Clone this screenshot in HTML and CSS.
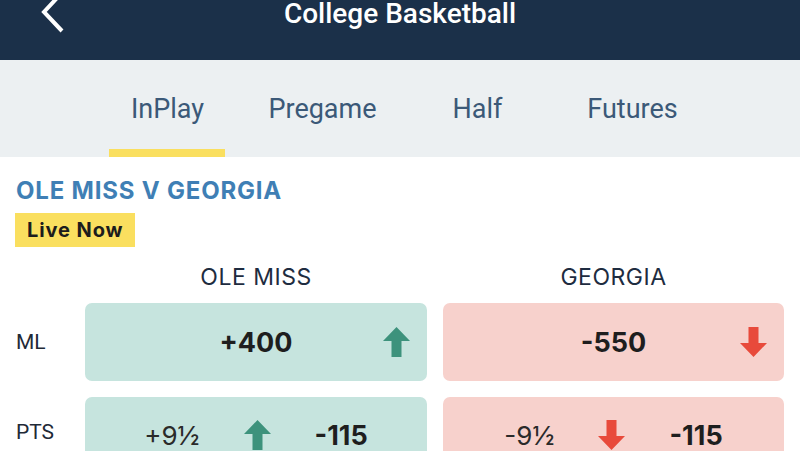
FILE: index.html
```html
<!DOCTYPE html>
<html>
<head>
<meta charset="utf-8">
<link rel="stylesheet" href="styles.css">
</head>
<body>
<header class="topbar">
  <svg class="back" width="30" height="36" viewBox="0 0 30 36"><polyline points="19,-2 6,12 24,31" fill="none" stroke="#fff" stroke-width="4"/></svg>
  <h1 class="title">College Basketball</h1>
</header>
<nav class="tabs">
  <div class="tab active"><span>InPlay</span></div>
  <div class="tab"><span>Pregame</span></div>
  <div class="tab"><span>Half</span></div>
  <div class="tab"><span>Futures</span></div>
</nav>
<main class="event">
  <h2 class="match">OLE MISS V GEORGIA</h2>
  <div class="badge">Live Now</div>
  <div class="grid">
    <div></div>
    <div class="colhead">OLE MISS</div>
    <div class="colhead">GEORGIA</div>

    <div class="label">ML</div>
    <div class="cell up single">
      <span></span>
      <span class="val">+400</span>
      <svg class="arrow" width="27" height="30" viewBox="0 0 27 30"><polygon points="0,14 13.5,0 27,14 18.5,14 18.5,30 8.5,30 8.5,14"/></svg>
    </div>
    <div class="cell down single">
      <span></span>
      <span class="val">-550</span>
      <svg class="arrow" width="27" height="30" viewBox="0 0 27 30"><polygon points="0,16 13.5,30 27,16 18.5,16 18.5,0 8.5,0 8.5,16"/></svg>
    </div>

    <div class="label">PTS</div>
    <div class="cell up split">
      <span class="line">+9½</span>
      <svg class="arrow" width="27" height="30" viewBox="0 0 27 30"><polygon points="0,14 13.5,0 27,14 18.5,14 18.5,30 8.5,30 8.5,14"/></svg>
      <span class="val">-115</span>
    </div>
    <div class="cell down split">
      <span class="line">-9½</span>
      <svg class="arrow" width="27" height="30" viewBox="0 0 27 30"><polygon points="0,16 13.5,30 27,16 18.5,16 18.5,0 8.5,0 8.5,16"/></svg>
      <span class="val">-115</span>
    </div>
  </div>
</main>
</body>
</html>
```
FILE: styles.css
```css
* { box-sizing: border-box; }
html, body { margin: 0; padding: 0; }
body {
  width: 800px;
  height: 451px;
  overflow: hidden;
  background: #fff;
  font-family: Inter, "Noto Sans", sans-serif;
  color: #1f2a37;
}
.topbar {
  height: 60px;
  background: #1b3049;
  display: flex;
  justify-content: center;
  align-items: flex-start;
  position: relative;
}
.back {
  position: absolute;
  left: 38px;
  top: 0;
}
.title {
  margin: 0;
  font-family: Roboto, sans-serif;
  font-weight: 500;
  font-size: 28px;
  line-height: 28px;
  color: #fff;
}
.tabs {
  height: 97px;
  background: #ecf0f2;
  display: flex;
  justify-content: center;
}
.tab {
  width: 155px;
  display: flex;
  justify-content: center;
  align-items: center;
  font-family: Roboto, sans-serif;
  font-size: 27px;
  color: #3b5978;
  position: relative;
}
.tab.active::after {
  content: "";
  position: absolute;
  bottom: 0;
  left: 19px;
  width: 116px;
  height: 8px;
  background: #fadf5f;
}
.event {
  padding: 20px 16px 0 16px;
}
.match {
  margin: 0;
  font-size: 24px;
  line-height: 28px;
  font-weight: 700;
  color: #3f7fb5;
  letter-spacing: 0.8px;
}
.badge {
  display: inline-block;
  margin-top: 8px;
  height: 34px;
  line-height: 34px;
  padding: 0 12px;
  margin-left: -1px;
  background: #fadf5f;
  font-size: 20px;
  font-weight: 700;
  color: #1c1c1c;
  letter-spacing: 0.9px;
}
.grid {
  display: grid;
  grid-template-columns: 53px 342px 341px;
  column-gap: 16px;
  grid-template-rows: 44px 78px 78px;
  row-gap: 12px;
}
.grid .cell:nth-child(n+7) { margin-top: 4px; }
.colhead {
  display: flex;
  align-items: flex-end;
  justify-content: center;
  font-size: 23px;
  line-height: 28px;
  color: #1e2c40;
  letter-spacing: 0.5px;
}
.label {
  display: flex;
  align-items: center;
  font-family: Roboto, sans-serif;
  font-size: 21px;
  color: #1f2a37;
}
.cell {
  border-radius: 7px;
  align-items: center;
}
.cell.up { background: #c6e4de; }
.cell.down { background: #f7d1cc; }
.cell.up .arrow { fill: #3d927c; }
.cell.down .arrow { fill: #e84a3b; }
.single {
  display: grid;
  grid-template-columns: 1fr auto 1fr;
  padding-right: 17px;
  padding-left: 17px;
}
.single .arrow { justify-self: end; }
.split {
  display: flex;
  justify-content: center;
  gap: 44px;
  padding-top: 2px;
}
.val {
  font-size: 27px;
  font-weight: 700;
  color: #1e1e1e;
}
.line {
  font-size: 26px;
  color: #2a2a2a;
}
```
